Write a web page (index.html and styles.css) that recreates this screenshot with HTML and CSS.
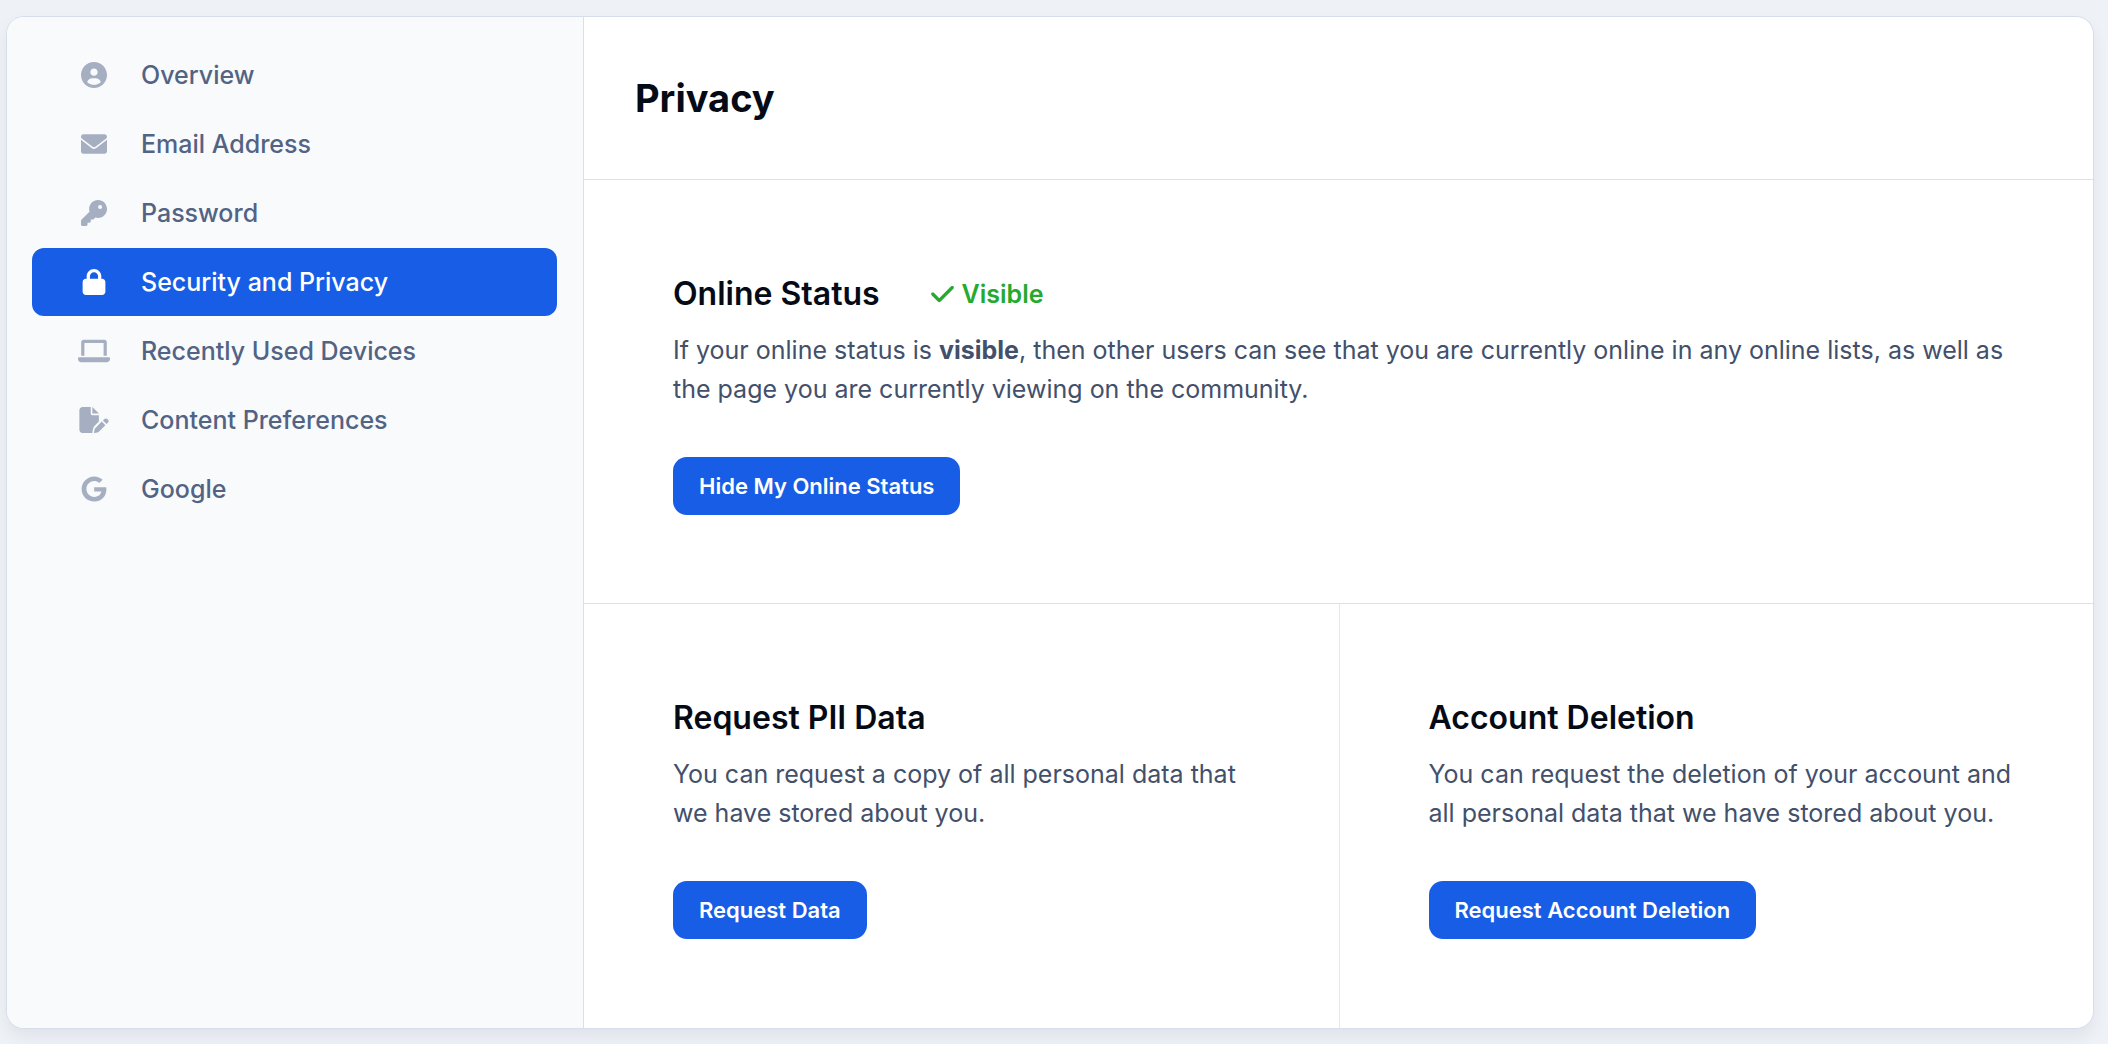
FILE: index.html
```html
<!DOCTYPE html>
<html lang="en">
<head>
  <meta charset="UTF-8" />
  <meta name="viewport" content="width=device-width, initial-scale=1.0"/>
  <title>Privacy</title>
  <link rel="stylesheet" href="styles.css">
</head>
<body>
  <div class="settings">
    <nav class="sidebar">
      <a href="#" class="nav-link">
        <svg class="icon" viewBox="0 0 512 512"><path d="M256 0C114.6 0 0 114.6 0 256s114.6 256 256 256s256-114.6 256-256S397.4 0 256 0zM256 128c39.77 0 72 32.24 72 72S295.8 272 256 272c-39.76 0-72-32.24-72-72S216.2 128 256 128zM256 448c-52.93 0-100.9-21.53-135.7-56.29C136.5 349.9 176.5 320 224 320h64c47.54 0 87.54 29.88 103.7 71.71C356.9 426.5 308.9 448 256 448z"/></svg>
        Overview
      </a>
      <a href="#" class="nav-link">
        <svg class="icon" viewBox="0 0 512 512"><path d="M256 352c-16.53 0-33.06-5.422-47.16-16.41L0 173.2V400C0 426.5 21.49 448 48 448h416c26.51 0 48-21.49 48-48V173.2l-208.8 162.5C289.1 346.6 272.5 352 256 352zM16.29 145.3l212.2 165.1c16.19 12.6 38.87 12.6 55.06 0l212.2-165.1C505.1 137.3 512 125 512 112C512 85.49 490.5 64 464 64h-416C21.49 64 0 85.49 0 112C0 125 6.01 137.3 16.29 145.3z"/></svg>
        Email Address
      </a>
      <a href="#" class="nav-link">
        <svg class="icon" viewBox="0 0 512 512"><path d="M336 352c97.2 0 176-78.8 176-176S433.2 0 336 0S160 78.8 160 176c0 18.7 2.9 36.8 8.3 53.7L7 391c-4.5 4.5-7 10.6-7 17v80c0 13.3 10.7 24 24 24h80c13.3 0 24-10.7 24-24V448h40c13.3 0 24-10.7 24-24V384h40c6.4 0 12.5-2.5 17-7l33.3-33.3c16.9 5.4 35 8.3 53.7 8.3zM376 96a40 40 0 1 1 0 80 40 40 0 1 1 0-80z"/></svg>
        Password
      </a>
      <a href="#" class="nav-link active">
        <svg class="icon" viewBox="0 0 448 512"><path d="M144 144v48H304V144c0-44.2-35.8-80-80-80s-80 35.8-80 80zM80 192V144C80 64.5 144.5 0 224 0s144 64.5 144 144v48h16c35.3 0 64 28.7 64 64V448c0 35.3-28.7 64-64 64H64c-35.3 0-64-28.7-64-64V256c0-35.3 28.7-64 64-64H80z"/></svg>
        Security and Privacy
      </a>
      <a href="#" class="nav-link">
        <svg class="icon" viewBox="0 0 640 512"><path d="M128 96h384v256h64V80C576 53.63 554.4 32 528 32h-416C85.63 32 64 53.63 64 80V352h64V96zM624 383.1h-608c-8.75 0-16 7.25-16 16v16c0 35.25 28.75 64 64 64h512c35.25 0 64-28.75 64-64v-16C640 391.2 632.8 383.1 624 383.1z"/></svg>
        Recently Used Devices
      </a>
      <a href="#" class="nav-link">
        <svg class="icon" viewBox="0 0 576 512"><path d="M0 64C0 28.7 28.7 0 64 0H224V128c0 17.7 14.3 32 32 32H384V285.7l-86.8 86.8c-10.3 10.3-17.5 23.1-21 37.2l-18.7 74.9c-2.3 9.2-1.8 18.8 1.3 27.5H64c-35.3 0-64-28.7-64-64V64zm384 64H256V0L384 128zM549.8 235.7l14.4 14.4c15.6 15.6 15.6 40.9 0 56.6l-29.4 29.4-71-71 29.4-29.4c15.6-15.6 40.9-15.6 56.6 0zM311.9 417L441.1 287.8l71 71L382.9 487.9c-4.1 4.1-9.2 7-14.9 8.4l-60.1 15c-5.5 1.4-11.2-.2-15.2-4.2s-5.6-9.7-4.2-15.2l15-60.1c1.4-5.6 4.3-10.8 8.4-14.9z"/></svg>
        Content Preferences
      </a>
      <a href="#" class="nav-link">
        <svg class="icon" viewBox="0 0 488 512"><path d="M488 261.8C488 403.3 391.1 504 248 504 110.8 504 0 393.2 0 256S110.8 8 248 8c66.8 0 123 24.5 166.3 64.9l-67.5 64.9C258.5 52.6 94.3 116.6 94.3 256c0 86.5 69.1 156.6 153.7 156.6 98.2 0 135-70.4 140.8-106.9H248v-85.3h236.1c2.3 12.7 3.9 24.9 3.9 41.4z"/></svg>
        Google
      </a>
    </nav>

    <main class="content">
      <header class="content-header">
        <h1>Privacy</h1>
      </header>

      <section class="panel">
        <div class="panel-title">
          <h2>Online Status</h2>
          <span class="status">
            <svg class="check" viewBox="0 0 448 512"><path d="M438.6 105.4c12.5 12.5 12.5 32.8 0 45.3l-256 256c-12.5 12.5-32.8 12.5-45.3 0l-128-128c-12.5-12.5-12.5-32.8 0-45.3s32.8-12.5 45.3 0L160 338.7 393.4 105.4c12.5-12.5 32.8-12.5 45.3 0z"/></svg>
            Visible
          </span>
        </div>
        <p>If your online status is <strong>visible</strong>, then other users can see that you are currently online in any online lists, as well as the page you are currently viewing on the community.</p>
        <button type="button">Hide My Online Status</button>
      </section>

      <div class="panel-row">
        <section class="panel">
          <div class="panel-title">
            <h2>Request PII Data</h2>
          </div>
          <p>You can request a copy of all personal data that we have stored about you.</p>
          <button type="button">Request Data</button>
        </section>
        <section class="panel">
          <div class="panel-title">
            <h2>Account Deletion</h2>
          </div>
          <p>You can request the deletion of your account and all personal data that we have stored about you.</p>
          <button type="button">Request Account Deletion</button>
        </section>
      </div>
    </main>
  </div>
</body>
</html>
```
FILE: styles.css
```css
* {
  margin: 0;
  padding: 0;
  box-sizing: border-box;
}

body {
  min-height: 100vh;
  padding: 16px 14px 15px 6px;
  background: #eef2f7;
  color: #42506b;
  font-family: Inter, "Liberation Sans", sans-serif;
  font-size: 25px;
  line-height: 39px;
}

.settings {
  display: flex;
  min-height: calc(100vh - 31px);
  background: #fff;
  border: 1px solid #d5deea;
  border-radius: 18px;
  box-shadow: 0 8px 16px rgba(15, 23, 42, 0.06);
  overflow: hidden;
}

/* Sidebar */
.sidebar {
  flex: 0 0 577px;
  display: flex;
  flex-direction: column;
  gap: 1px;
  padding: 24px 26px 24px 25px;
  background: #f8fafc;
  border-right: 1px solid #d9e0ec;
}

.nav-link {
  display: flex;
  align-items: center;
  gap: 31px;
  height: 68px;
  padding: 0 46px;
  border-radius: 12px;
  color: #526383;
  font-weight: 500;
  text-decoration: none;
}

.icon {
  width: 32px;
  height: 26px;
  fill: #a5afc1;
}

.nav-link.active {
  background: #175de6;
  color: #fff;
}

.nav-link.active .icon {
  fill: #fff;
}

/* Content */
.content {
  flex: 1;
  min-width: 0;
  display: flex;
  flex-direction: column;
}

.content-header {
  padding: 56px 51px;
  border-bottom: 1px solid #d9e0ec;
}

h1 {
  color: #050b16;
  font-size: 38px;
  line-height: 50px;
  font-weight: 700;
}

.panel {
  padding: 88px 76px 88px 89px;
}

.panel-title {
  display: flex;
  align-items: center;
  gap: 51px;
  margin-bottom: 11px;
}

h2 {
  color: #050b16;
  font-size: 32px;
  line-height: 52px;
  font-weight: 600;
}

.status {
  display: flex;
  align-items: center;
  gap: 8px;
  color: #25a92f;
  font-weight: 600;
}

.check {
  width: 23px;
  height: 26px;
  fill: #25a92f;
}

p {
  margin-bottom: 48px;
}

strong {
  font-weight: 700;
}

button {
  display: block;
  height: 58px;
  padding: 0 26px;
  border: none;
  border-radius: 14px;
  background: #175de6;
  color: #fff;
  font-family: inherit;
  font-size: 22px;
  font-weight: 600;
  cursor: pointer;
}

.panel-row {
  flex: 1;
  display: grid;
  grid-template-columns: 1fr 1fr;
  border-top: 1px solid #d9e0ec;
}

.panel-row .panel + .panel {
  border-left: 1px solid #e2e8f0;
}
```
